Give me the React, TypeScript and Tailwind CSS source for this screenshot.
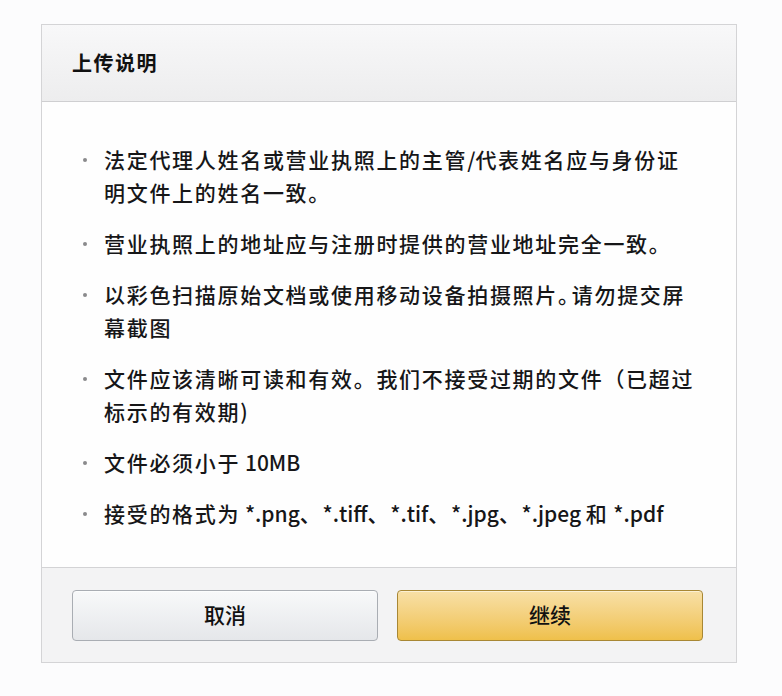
import React from "react";

const items: string[][] = [
  ["法定代理人姓名或营业执照上的主管/代表姓名应与身份证", "明文件上的姓名一致。"],
  ["营业执照上的地址应与注册时提供的营业地址完全一致。"],
  ["以彩色扫描原始文档或使用移动设备拍摄照片。 请勿提交屏", "幕截图"],
  ["文件应该清晰可读和有效。我们不接受过期的文件（已超过", "标示的有效期)"],
  ["文件必须小于 10MB"],
  ["接受的格式为 *.png、*.tiff、*.tif、*.jpg、*.jpeg 和 *.pdf"],
];

const CJK = /[\u3000-\u9fff\uff00-\uffef]/;

function Segment({ text }: { text: string }) {
  const parts = text.match(/[\u3000-\u9fff\uff00-\uffef]+|[^\u3000-\u9fff\uff00-\uffef]+/g) || [];
  return (
    <>
      {parts.map((p, i) =>
        CJK.test(p) ? (
          <span key={i} className="tracking-[1.7px]">{p}</span>
        ) : (
          <span key={i} className="tracking-[0px]">{p}</span>
        )
      )}
    </>
  );
}

function Runs({ text }: { text: string }) {
  const pieces = text.split("。 ");
  return (
    <>
      {pieces.map((p, i) => (
        <React.Fragment key={i}>
          {i > 0 && <span className="tracking-[-6px]">。 </span>}
          <Segment text={p} />
        </React.Fragment>
      ))}
    </>
  );
}

export default function App() {
  return (
    <div
      className="w-[782px] h-[696px] bg-[#fcfcfd] pt-[24px] pl-[41px]"
      style={{ fontFamily: '"Noto Sans CJK SC", "Noto Sans", sans-serif' }}
    >
      <div className="w-[696px] h-[639px] border border-[#d4d4d6] flex flex-col bg-white">
        <div className="h-[77px] flex items-center pl-[30px] bg-gradient-to-b from-[#f8f8f9] to-[#ededee] border-b border-[#cfcfd1]">
          <span className="text-[20px] font-bold text-[#111] tracking-[1.5px]">上传说明</span>
        </div>
        <div className="flex-1 bg-[#fefefe] pt-[41px] pl-[40px] pr-[10px] flex flex-col gap-[18px]">
          {items.map((lines, i) => (
            <div key={i} className="flex">
              <div className="w-[22px] h-[33px] flex items-center">
                <span className="w-[4px] h-[4px] rounded-full bg-[#8a8a8c] ml-[1px]" />
              </div>
              <div className="flex flex-col">
                {lines.map((l, j) => (
                  <div key={j} className="text-[21px] font-medium leading-[33px] text-[#161618] whitespace-nowrap">
                    <Runs text={l} />
                  </div>
                ))}
              </div>
            </div>
          ))}
        </div>
        <div className="h-[95px] bg-[#f3f3f4] border-t border-[#d3d3d5] flex items-center pl-[30px] gap-[19px]">
          <button className="w-[306px] h-[51px] rounded-[4px] border border-[#a9adb3] bg-gradient-to-b from-[#f8f9fa] to-[#e5e7ea] text-[21px] font-medium text-[#111] shadow-[inset_0_1px_0_rgba(255,255,255,0.6)]">
            取消
          </button>
          <button className="w-[306px] h-[51px] rounded-[4px] border border-[#a88734] bg-gradient-to-b from-[#f8e0a6] to-[#efc04a] text-[21px] font-medium text-[#111] shadow-[inset_0_1px_0_rgba(255,255,255,0.5)]">
            继续
          </button>
        </div>
      </div>
    </div>
  );
}
